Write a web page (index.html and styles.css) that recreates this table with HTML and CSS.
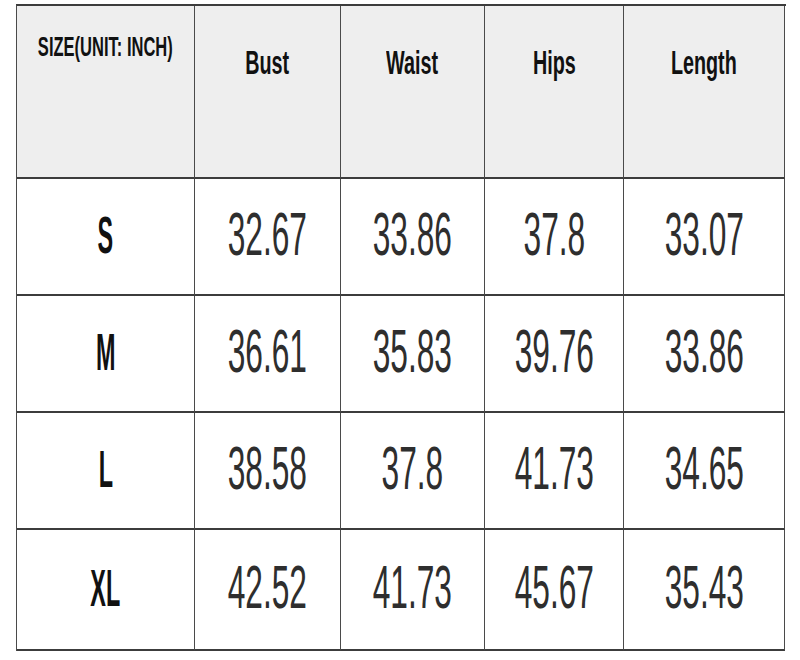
FILE: index.html
```html
<!DOCTYPE html>
<html lang="en">
<head>
<meta charset="utf-8">
<title>Size Chart</title>
<link rel="stylesheet" href="styles.css">
</head>
<body>
<div class="chart">
  <div class="cell head first"><span class="t-head-small">SIZE(UNIT: INCH)</span></div>
  <div class="cell head"><span class="t-head">Bust</span></div>
  <div class="cell head"><span class="t-head">Waist</span></div>
  <div class="cell head"><span class="t-head">Hips</span></div>
  <div class="cell head"><span class="t-head">Length</span></div>

  <div class="cell"><span class="t-size">S</span></div>
  <div class="cell"><span class="t-num">32.67</span></div>
  <div class="cell"><span class="t-num">33.86</span></div>
  <div class="cell"><span class="t-num">37.8</span></div>
  <div class="cell"><span class="t-num">33.07</span></div>

  <div class="cell"><span class="t-size">M</span></div>
  <div class="cell"><span class="t-num">36.61</span></div>
  <div class="cell"><span class="t-num">35.83</span></div>
  <div class="cell"><span class="t-num">39.76</span></div>
  <div class="cell"><span class="t-num">33.86</span></div>

  <div class="cell"><span class="t-size">L</span></div>
  <div class="cell"><span class="t-num">38.58</span></div>
  <div class="cell"><span class="t-num">37.8</span></div>
  <div class="cell"><span class="t-num">41.73</span></div>
  <div class="cell"><span class="t-num">34.65</span></div>

  <div class="cell last"><span class="t-size">XL</span></div>
  <div class="cell last"><span class="t-num">42.52</span></div>
  <div class="cell last"><span class="t-num">41.73</span></div>
  <div class="cell last"><span class="t-num">45.67</span></div>
  <div class="cell last"><span class="t-num">35.43</span></div>
</div>
</body>
</html>
```
FILE: styles.css
```css
html, body {
  margin: 0;
  padding: 0;
  background: #ffffff;
}

body {
  font-family: "Liberation Sans", Arial, sans-serif;
}

.chart {
  margin: 4px 0 0 16px;
  width: 769px;
  display: grid;
  grid-template-columns: 178px 146px 144px 139px 161px;
  grid-template-rows: 173px 117px 117px 117px 121px;
  border-left: 1px solid #4a4a4a;
  border-top: 2px solid #3c3c3c;
}

.cell {
  box-sizing: border-box;
  border-right: 1px solid #4a4a4a;
  border-bottom: 2px solid #3c3c3c;
  display: flex;
  justify-content: center;
  align-items: center;
  padding-bottom: 4px;
  overflow: hidden;
}

.head {
  background: #eeeeee;
  align-items: flex-start;
  padding: 40px 0 0 0;
}

.head.first {
  padding-top: 27px;
}

.t-head-small,
.t-head,
.t-size,
.t-num {
  display: inline-block;
  line-height: 1;
  white-space: nowrap;
}

.t-head-small {
  font-size: 28px;
  font-weight: bold;
  color: #111111;
  transform: scaleX(0.59);
}

.t-head {
  font-size: 33.5px;
  font-weight: bold;
  color: #111111;
  transform: scaleX(0.59);
}

.t-size {
  font-size: 52px;
  font-weight: bold;
  color: #111111;
  transform: scaleX(0.45);
}

.t-num {
  font-size: 61px;
  font-weight: normal;
  color: #2e2e2e;
  transform: scaleX(0.52);
}
```
